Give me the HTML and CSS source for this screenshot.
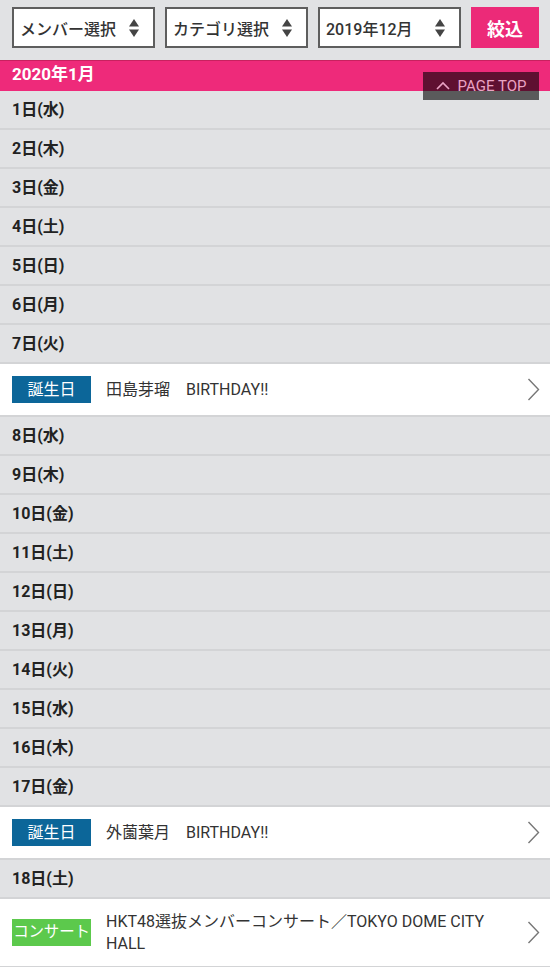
FILE: index.html
```html
<!DOCTYPE html>
<html lang="ja">
<head>
<meta charset="utf-8">
<title>スケジュール</title>
<link rel="stylesheet" href="styles.css">
</head>
<body>
<div class="filter">
  <div class="select"><span>メンバー選択</span><svg class="updown" width="10" height="18" viewBox="0 0 10 18"><polygon points="0,7.5 5,0 10,7.5"/><polygon points="0,10.5 10,10.5 5,18"/></svg></div>
  <div class="select"><span>カテゴリ選択</span><svg class="updown" width="10" height="18" viewBox="0 0 10 18"><polygon points="0,7.5 5,0 10,7.5"/><polygon points="0,10.5 10,10.5 5,18"/></svg></div>
  <div class="select"><span>2019年12月</span><svg class="updown" width="10" height="18" viewBox="0 0 10 18"><polygon points="0,7.5 5,0 10,7.5"/><polygon points="0,10.5 10,10.5 5,18"/></svg></div>
  <div class="btn">絞込</div>
</div>
<div class="month">2020年1月
  <div class="pagetop"><svg width="14" height="9" viewBox="0 0 14 9"><polyline points="1,8 7,2 13,8" fill="none" stroke="currentColor" stroke-width="1.6"/></svg><span>PAGE TOP</span></div>
</div>
<ul class="days">
  <li class="day">1日(水)</li>
  <li class="day">2日(木)</li>
  <li class="day">3日(金)</li>
  <li class="day">4日(土)</li>
  <li class="day">5日(日)</li>
  <li class="day">6日(月)</li>
  <li class="day">7日(火)</li>
  <li class="event"><span class="badge birthday">誕生日</span><span class="title">田島芽瑠　BIRTHDAY!!</span><svg class="chev" width="13" height="23" viewBox="0 0 13 23"><polyline points="1.5,1 11.5,11.5 1.5,22" fill="none" stroke="#777" stroke-width="1.4"/></svg></li>
  <li class="day">8日(水)</li>
  <li class="day">9日(木)</li>
  <li class="day">10日(金)</li>
  <li class="day">11日(土)</li>
  <li class="day">12日(日)</li>
  <li class="day">13日(月)</li>
  <li class="day">14日(火)</li>
  <li class="day">15日(水)</li>
  <li class="day">16日(木)</li>
  <li class="day">17日(金)</li>
  <li class="event"><span class="badge birthday">誕生日</span><span class="title">外薗葉月　BIRTHDAY!!</span><svg class="chev" width="13" height="23" viewBox="0 0 13 23"><polyline points="1.5,1 11.5,11.5 1.5,22" fill="none" stroke="#777" stroke-width="1.4"/></svg></li>
  <li class="day">18日(土)</li>
  <li class="event tall"><span class="badge concert">コンサート</span><span class="title">HKT48選抜メンバーコンサート／TOKYO DOME CITY HALL</span><svg class="chev" width="13" height="23" viewBox="0 0 13 23"><polyline points="1.5,1 11.5,11.5 1.5,22" fill="none" stroke="#777" stroke-width="1.4"/></svg></li>
</ul>
</body>
</html>
```
FILE: styles.css
```css
* { box-sizing: border-box; }
html, body { margin: 0; padding: 0; }
body {
  font-family: Roboto, "Noto Sans CJK JP", sans-serif;
  color: #333;
  background: #e1e2e4;
  width: 550px;
}
.filter {
  display: flex;
  gap: 10px;
  height: 60px;
  padding: 7px 11px 0 12px;
  background: #e1e2e4;
}
.select {
  width: 143px;
  height: 41px;
  border: 2px solid #5e5e5e;
  background: #fff;
  display: flex;
  align-items: center;
  justify-content: space-between;
  padding: 0 14px 0 6px;
  font-size: 16px;
  font-weight: 500;
  color: #333;
}
.updown { fill: #444; display: block; }
.btn {
  width: 68px;
  height: 41px;
  background: #ec2a78;
  color: #fff;
  font-weight: 700;
  font-size: 18px;
  display: flex;
  align-items: center;
  justify-content: center;
}
.month {
  position: relative;
  height: 31px;
  border-top: 1px solid #c8215f;
  background: #ee2a7a;
  color: #fff;
  font-weight: 700;
  font-size: 17px;
  line-height: 27px;
  padding-left: 12px;
}
.pagetop {
  position: absolute;
  top: 11px;
  right: 11px;
  width: 116px;
  height: 28px;
  background: rgba(0, 0, 0, 0.6);
  color: #eaa3c4;
  font-weight: 400;
  font-size: 15px;
  line-height: 28px;
  display: flex;
  align-items: center;
  justify-content: center;
  gap: 8px;
  z-index: 2;
}
.pagetop svg { display: block; margin-top: -1px; }
.days { list-style: none; margin: 0; padding: 0; }
.day {
  height: 39px;
  border-bottom: 2px solid #d3d4d6;
  background: #e1e2e4;
  padding-left: 12px;
  font-weight: 700;
  font-size: 16px;
  line-height: 37px;
  color: #222;
}
.event {
  display: flex;
  align-items: center;
  height: 53px;
  border-bottom: 2px solid #d3d4d6;
  background: #fff;
  padding: 0 10px 0 12px;
}
.event.tall { height: 69px; }
.badge {
  flex: none;
  width: 79px;
  height: 27px;
  color: #fff;
  font-size: 16px;
  line-height: 27px;
  text-align: center;
  white-space: nowrap;
}
.birthday { background: #0c6699; }
.concert { background: #5cc94c; font-size: 15.5px; letter-spacing: -0.2px; }
.title {
  flex: 1;
  margin-left: 15px;
  padding-right: 10px;
  font-size: 16px;
  line-height: 22px;
  color: #333;
}
.chev { flex: none; display: block; }
```
